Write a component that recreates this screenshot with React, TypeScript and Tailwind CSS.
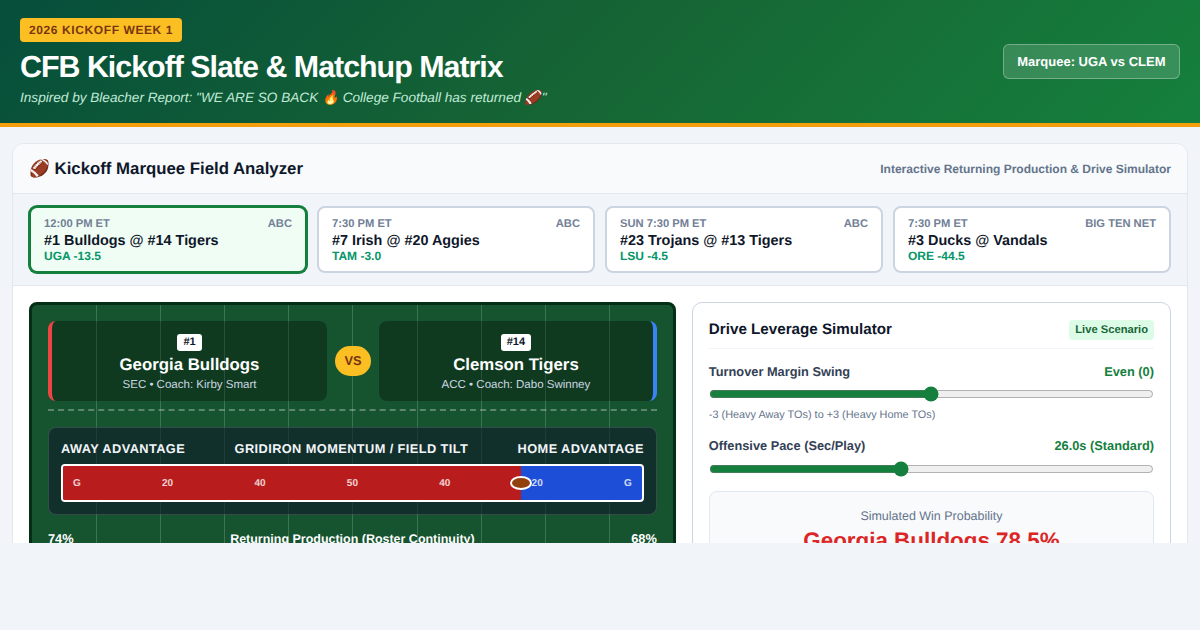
const games = [
  { time: "12:00 PM ET", net: "ABC", title: "#1 Bulldogs @ #14 Tigers", line: "UGA -13.5", active: true },
  { time: "7:30 PM ET", net: "ABC", title: "#7 Irish @ #20 Aggies", line: "TAM -3.0", active: false },
  { time: "SUN 7:30 PM ET", net: "ABC", title: "#23 Trojans @ #13 Tigers", line: "LSU -4.5", active: false },
  { time: "7:30 PM ET", net: "BIG TEN NET", title: "#3 Ducks @ Vandals", line: "ORE -44.5", active: false },
];

const markers = ["G", "20", "40", "50", "40", "20", "G"];

function GameCard({ game }: { game: (typeof games)[number] }) {
  return (
    <div
      className={
        game.active
          ? "rounded-lg border-2 border-[#15803d] bg-[#f0fdf4] px-[13px] pt-[10px] pb-2 shadow-[0_0_0_1px_#15803d]"
          : "rounded-lg border-2 border-[#cbd5e1] bg-white px-[13px] pt-[10px] pb-2"
      }
    >
      <div className="flex justify-between text-[11.2px] leading-[13px] font-bold text-[#718096]">
        <span>{game.time}</span>
        <span>{game.net}</span>
      </div>
      <div className="mt-[2px] text-[14.4px] leading-[16px] font-bold text-[#0f172a]">{game.title}</div>
      <div className="text-[12px] leading-[14px] font-bold text-[#059669]">{game.line}</div>
    </div>
  );
}

function TeamCard({ rank, name, sub, side }: { rank: string; name: string; sub: string; side: "left" | "right" }) {
  return (
    <div
      className={
        side === "left"
          ? "flex h-20 flex-col items-center rounded-lg border-l-4 border-[#ef4444] bg-black/30 pt-[13px]"
          : "flex h-20 flex-col items-center rounded-lg border-r-4 border-[#3b82f6] bg-black/30 pt-[13px]"
      }
    >
      <span className="rounded-[3px] bg-white px-[6px] text-[11px] leading-[17px] font-bold text-[#0f172a]">{rank}</span>
      <div className="mt-[2px] text-[16.8px] leading-[24px] font-bold text-white">{name}</div>
      <div className="mt-[1px] text-[11.52px] leading-[14px] text-[#cbd5e1]">{sub}</div>
    </div>
  );
}

function Field() {
  return (
    <div className="self-start rounded-lg border-[3px] border-[#052e16] bg-[#16532f] bg-[repeating-linear-gradient(90deg,transparent,transparent_calc(10%-1px),rgba(255,255,255,0.18)_calc(10%-1px),rgba(255,255,255,0.18)_10%)] bg-position-[1px_0] bg-no-repeat p-4">
      <div className="grid grid-cols-[279px_36px_1fr] items-center gap-2 border-b-2 border-dashed border-white/30 pb-2">
        <TeamCard rank="#1" name="Georgia Bulldogs" sub="SEC • Coach: Kirby Smart" side="left" />
        <div className="flex h-[30px] w-9 items-center justify-center rounded-[15px] bg-[#fbbf24] text-[12.8px] font-bold text-[#78350f]">VS</div>
        <TeamCard rank="#14" name="Clemson Tigers" sub="ACC • Coach: Dabo Swinney" side="right" />
      </div>

      <div className="mt-4 rounded-lg border border-white/15 bg-[#0f172a]/60 px-3 pt-3 pb-3">
        <div className="flex justify-between text-[12.8px] leading-[18px] font-bold tracking-[0.4px] text-[#f1f5f9]">
          <span>AWAY ADVANTAGE</span>
          <span>GRIDIRON MOMENTUM / FIELD TILT</span>
          <span>HOME ADVANTAGE</span>
        </div>
        <div className="relative mt-[6px] h-[38px] overflow-hidden rounded border-2 border-white bg-[#1d4ed8]">
          <div className="h-full w-[79.1%] bg-[#b91c1c]" />
          <div className="absolute inset-0 flex items-center justify-between px-[10px] text-[10px] font-bold text-white/80">
            {markers.map((m, i) => (
              <span key={i}>{m}</span>
            ))}
          </div>
          <div className="absolute top-[10px] left-[447px] h-[14px] w-[22px] rounded-[50%] border-2 border-white bg-[#92400e]" />
        </div>
      </div>

      <div className="mt-4 flex items-center justify-between text-[12.8px] leading-[16px] font-bold text-white">
        <span>74%</span>
        <span className="text-[12.48px]">Returning Production (Roster Continuity)</span>
        <span>68%</span>
      </div>
      <div className="mt-2 h-2 rounded bg-white/20" />
    </div>
  );
}

function Simulator() {
  return (
    <div className="rounded-[10px] border border-[#cbd5e1] bg-white p-4">
      <div className="flex h-[30px] items-start justify-between border-b border-[#f1f5f9]">
        <h3 className="text-[15.2px] leading-[21px] font-bold text-[#0f172a]">Drive Leverage Simulator</h3>
        <span className="mt-px rounded bg-[#dcfce7] px-[6px] py-[3px] text-[11.2px] leading-[14px] font-bold text-[#166534]">Live Scenario</span>
      </div>

      <div className="mt-[14px] flex justify-between text-[12.8px] leading-[18px] font-bold text-[#334155]">
        <span>Turnover Margin Swing</span>
        <span className="text-[#15803d]">Even (0)</span>
      </div>
      <input type="range" min={-3} max={3} step={1} defaultValue={0} className="mt-[5px] block w-full accent-[#15803d]" />
      <div className="mt-[6px] text-[10.88px] leading-[14px] text-[#64748b]">-3 (Heavy Away TOs) to +3 (Heavy Home TOs)</div>

      <div className="mt-[15px] flex justify-between text-[12.8px] leading-[18px] font-bold text-[#334155]">
        <span>Offensive Pace (Sec/Play)</span>
        <span className="text-[#15803d]">26.0s (Standard)</span>
      </div>
      <input type="range" min={20} max={34} step={0.5} defaultValue={26} className="mt-[6px] block w-full accent-[#15803d]" />

      <div className="mt-[14px] rounded-lg border border-[#e2e8f0] bg-[#f8fafc] px-4 pt-[15px] pb-4 text-center">
        <div className="text-[12.48px] leading-[18px] text-[#64748b]">Simulated Win Probability</div>
        <div className="mt-px text-[22.4px] leading-[30px] font-bold text-[#dc2626]">Georgia Bulldogs 78.5%</div>
      </div>
    </div>
  );
}

export default function App() {
  return (
    <div className="h-[630px] overflow-hidden bg-[#f1f5f9] font-['Liberation_Sans','Noto_Color_Emoji',sans-serif] [text-rendering:geometricPrecision]">
      <header className="flex h-[127px] items-center justify-between border-b-4 border-[#f59e0b] bg-[linear-gradient(135deg,#064e3b,#166534_50%,#15803d)] px-5">
        <div className="self-start pt-[18px]">
          <span className="block w-fit rounded bg-[#fbbf24] px-[9px] text-[12px] leading-6 font-bold tracking-[0.6px] text-[#78350f]">2026 KICKOFF WEEK 1</span>
          <h1 className="mt-[6px] text-[30.4px] leading-[38px] font-bold tracking-[-1px] text-white">CFB Kickoff Slate &amp; Matchup Matrix</h1>
          <p className="mt-[2px] text-[13.6px] leading-[20px] text-[#c0ead6] italic">Inspired by Bleacher Report: "WE ARE SO BACK 🔥 College Football has returned 🏈"</p>
        </div>
        <div className="rounded-md border border-white/30 bg-white/15 px-[13.5px] text-[13px] leading-[33px] font-bold text-white">Marquee: UGA vs CLEM</div>
      </header>

      <main className="h-[416px] overflow-hidden px-3 pt-4">
        <div className="overflow-hidden rounded-xl border border-[#e2e8f0] bg-white">
          <div className="flex h-[50px] items-center justify-between border-b border-[#e2e8f0] bg-[#f8fafc] px-4">
            <h2 className="text-[16.8px] font-bold text-[#0f172a]">🏈 Kickoff Marquee Field Analyzer</h2>
            <span className="text-[12px] font-bold text-[#64748b]">Interactive Returning Production &amp; Drive Simulator</span>
          </div>

          <div className="grid grid-cols-4 gap-[10px] border-b border-[#e2e8f0] bg-[#f1f5f9] px-4 py-3">
            {games.map((game) => (
              <GameCard key={game.title} game={game} />
            ))}
          </div>

          <div className="grid grid-cols-[1.35fr_1fr] gap-4 p-4">
            <Field />
            <Simulator />
          </div>
        </div>
      </main>
    </div>
  );
}
